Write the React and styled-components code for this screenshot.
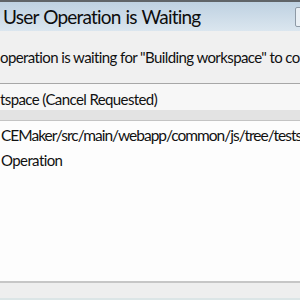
import styled, { createGlobalStyle } from "styled-components";

const Global = createGlobalStyle`
  html, body {
    margin: 0;
    padding: 0;
    background: #f0f0f0;
  }
  body {
    font-family: Lato, "Noto Sans", sans-serif;
    color: #111;
  }
`;

const Window = styled.div`
  width: 300px;
  height: 300px;
  overflow: hidden;
  display: flex;
  flex-direction: column;
  background: #f0f0f0;
  border-top: 2px solid #5f6468;
  box-sizing: border-box;
`;

const TitleBar = styled.div`
  height: 29px;
  flex: none;
  display: flex;
  align-items: center;
  justify-content: space-between;
  background: linear-gradient(#bed1e1, #dbe6ef);
  padding-left: 3px;
  box-sizing: border-box;
`;

const Title = styled.div`
  font-size: 19px;
  color: #0d0d0d;
  white-space: nowrap;
  letter-spacing: -0.8px;
  word-spacing: 1px;
`;

const CloseBox = styled.div`
  width: 14px;
  height: 18px;
  margin-right: -11px;
  border: 1px solid #8e9aa6;
  border-radius: 2px;
  background: #eaf0f5;
`;

const Message = styled.div`
  height: 53px;
  flex: none;
  display: flex;
  align-items: center;
  font-size: 15px;
  white-space: nowrap;
  letter-spacing: -0.6px;
  box-sizing: border-box;
  border-bottom: 1px solid #a7a7a7;
`;

const Row = styled.div`
  height: ${(p) => p.$h}px;
  flex: none;
  display: flex;
  align-items: center;
  padding-top: ${(p) => p.$pt || 0}px;
  padding-left: ${(p) => p.$pl || 0}px;
  font-size: ${(p) => p.$fs || 15}px;
  letter-spacing: ${(p) => p.$ls ?? -0.6}px;
  white-space: nowrap;
  background: ${(p) => p.$bg};
  box-sizing: border-box;
`;

const Band = styled.div`
  height: 11px;
  flex: none;
  background: #e3e3e3;
  border-bottom: 1px solid #c4c4c4;
  box-sizing: border-box;
`;

const Details = styled.div`
  flex: 1;
  background: #fdfdfd;
  display: flex;
  flex-direction: column;
`;

const Footer = styled.div`
  height: 19px;
  flex: none;
  border-top: 2px solid #c6c6c6;
  border-bottom: 2px solid #dbe5e6;
  background: #eeeeee;
  box-sizing: border-box;
`;

export default function App() {
  return (
    <>
      <Global />
      <Window>
        <TitleBar>
          <Title>User Operation is Waiting</Title>
          <CloseBox />
        </TitleBar>
        <Message>operation is waiting for "Building workspace" to co</Message>
        <Row $h={26} $pt={3} $bg="#f7f7f7">tspace (Cancel Requested)</Row>
        <Band />
        <Details>
          <Row $h={27} $pt={1} $pl={1} $fs={15.5} $ls={-1} $bg="transparent">
            CEMaker/src/main/webapp/common/js/tree/tests
          </Row>
          <Row $h={24} $pl={1} $bg="transparent">Operation</Row>
        </Details>
        <Footer />
      </Window>
    </>
  );
}
